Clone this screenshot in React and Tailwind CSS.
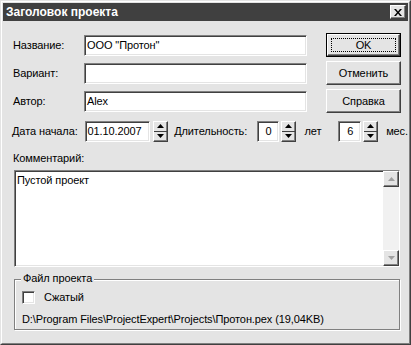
import React from "react";

// Sunken 3D edge used by edit boxes
const sunken =
  "border border-t-[#808080] border-l-[#808080] border-r-white border-b-white shadow-[inset_1px_1px_0_#404040,inset_-1px_-1px_0_#e4e4e4]";
// Raised 3D edge used by buttons
const raised =
  "border border-t-white border-l-white border-r-[#404040] border-b-[#404040] shadow-[inset_-1px_-1px_0_#808080]";

function Field({ value, className }) {
  return (
    <div className={`h-[21px] bg-white flex items-center pl-[2px] ${sunken} ${className}`}>
      {value}
    </div>
  );
}

function Spinner() {
  return (
    <div className={`w-[15px] h-[21px] flex flex-col bg-[#e4e4e4] ${raised}`}>
      <div className="flex-1 flex items-center justify-center border-b border-[#404040]">
        <svg width="7" height="4" viewBox="0 0 7 4">
          <path d="M3.5 0 L7 4 L0 4 Z" fill="#000" />
        </svg>
      </div>
      <div className="flex-1 flex items-center justify-center">
        <svg width="7" height="4" viewBox="0 0 7 4">
          <path d="M0 0 L7 0 L3.5 4 Z" fill="#000" />
        </svg>
      </div>
    </div>
  );
}

function Button({ label, isDefault }) {
  if (isDefault) {
    return (
      <div className="w-[75px] h-[24px] border border-black">
        <div className={`w-full h-full bg-[#e4e4e4] flex items-center justify-center p-[3px] ${raised}`}>
          <div className="w-full h-full flex items-center justify-center border border-dotted border-black">
            {label}
          </div>
        </div>
      </div>
    );
  }
  return (
    <div className={`w-[75px] h-[24px] bg-[#e4e4e4] flex items-center justify-center ${raised}`}>
      {label}
    </div>
  );
}

function Row({ label, value, button, isDefault }) {
  return (
    <div className="h-[28px] flex items-center">
      <div className="w-[73px] pl-[2px]">{label}</div>
      <Field value={value} className="w-[223px]" />
      <div className="ml-[19px]">
        <Button label={button} isDefault={isDefault} />
      </div>
    </div>
  );
}

export default function App() {
  return (
    <div
      className="w-[411px] h-[345px] bg-[#e4e4e4] text-black text-[11px] leading-none tracking-[-0.1px] border border-t-[#e4e4e4] border-l-[#e4e4e4] border-r-[#404040] border-b-[#404040] overflow-hidden"
      style={{ fontFamily: '"Liberation Sans", Arial, sans-serif' }}
    >
      <div className="h-full border border-t-white border-l-white border-r-[#808080] border-b-[#808080] p-[1px] flex flex-col">
        {/* Title bar */}
        <div className="h-[18px] bg-[#404040] flex items-center justify-between pl-[3px] pr-[2px]">
          <span className="text-white font-bold text-[12px] tracking-normal">Заголовок проекта</span>
          <div className={`w-[16px] h-[14px] bg-[#e4e4e4] flex items-center justify-center ${raised}`}>
            <svg width="8" height="7" viewBox="0 0 8 7">
              <path d="M0 0 L2 0 L4 2.5 L6 0 L8 0 L5 3.5 L8 7 L6 7 L4 4.5 L2 7 L0 7 L3 3.5 Z" fill="#000" />
            </svg>
          </div>
        </div>

        <div className="pl-[8px] pt-[10px] flex flex-col">
          <Row label="Название:" value={'ООО "Протон"'} button="OK" isDefault />
          <Row label="Вариант:" value="" button="Отменить" />
          <Row label="Автор:" value="Alex" button="Справка" />

          {/* Date / duration */}
          <div className="h-[32px] flex items-center">
            <div className="w-[74px] pl-[1px]">Дата начала:</div>
            <Field value="01.10.2007" className="w-[66px]" />
            <div className="ml-[3px]">
              <Spinner />
            </div>
            <div className="ml-[6px] w-[83px]">Длительность:</div>
            <Field value={<span className="pl-[6px]">0</span>} className="w-[23px]" />
            <div className="ml-[2px]">
              <Spinner />
            </div>
            <div className="ml-[8px] w-[34px]">лет</div>
            <Field value={<span className="pl-[6px]">6</span>} className="w-[23px]" />
            <div className="ml-[2px]">
              <Spinner />
            </div>
            <div className="ml-[8px]">мес.</div>
          </div>

          <div className="h-[18px] flex items-center pl-[2px] mt-[2px]">Комментарий:</div>

          {/* Comment box */}
          <div className={`mt-[3px] ml-[3px] w-[386px] h-[97px] bg-white flex ${sunken}`}>
            <div className="flex-1 pl-[2px] pt-[4px]">Пустой проект</div>
            <div className="w-[16px] bg-[#f1f1f1] flex flex-col justify-between">
              <div className={`h-[16px] bg-[#e4e4e4] flex items-center justify-center ${raised}`}>
                <svg width="7" height="4" viewBox="0 0 7 4">
                  <path d="M3.5 0 L7 4 L0 4 Z" fill="#a0a0a0" />
                </svg>
              </div>
              <div className={`h-[16px] bg-[#e4e4e4] flex items-center justify-center ${raised}`}>
                <svg width="7" height="4" viewBox="0 0 7 4">
                  <path d="M0 0 L7 0 L3.5 4 Z" fill="#a0a0a0" />
                </svg>
              </div>
            </div>
          </div>

          {/* Project file group */}
          <div className="relative mt-[12px] ml-[3px] w-[386px] h-[51px] border border-[#808080] shadow-[1px_1px_0_white,inset_1px_1px_0_white]">
            <div className="absolute -top-[7px] left-[6px] px-[2px] bg-[#e4e4e4]">Файл проекта</div>
            <div className="pl-[7px] pt-[11px] flex items-center">
              <div className={`w-[13px] h-[13px] bg-white ${sunken}`} />
              <span className="ml-[9px]">Сжатый</span>
            </div>
            <div className="pl-[7px] mt-[10px]">
              D:\Program Files\ProjectExpert\Projects\Протон.pex (19,04KB)
            </div>
          </div>
        </div>
      </div>
    </div>
  );
}
